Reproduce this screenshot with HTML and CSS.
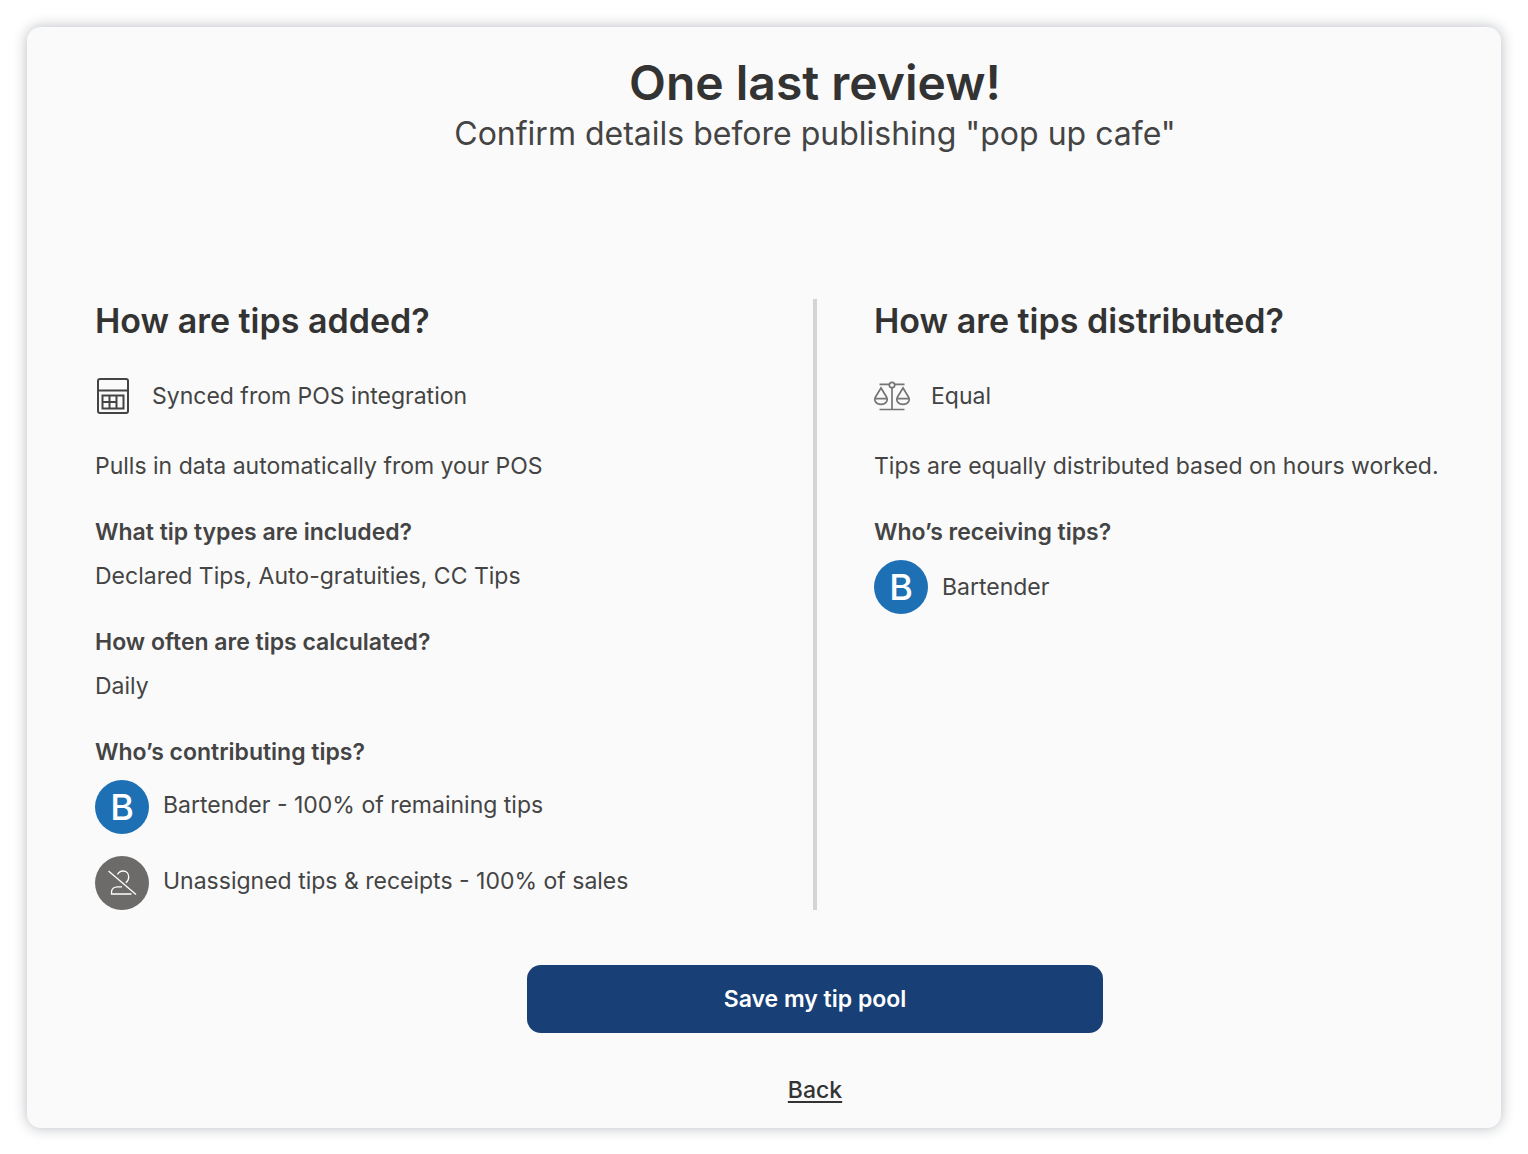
FILE: index.html
```html
<!DOCTYPE html>
<html lang="en">
<head>
<meta charset="utf-8">
<title>One last review!</title>
<meta name="viewport" content="width=device-width, initial-scale=1">
<link rel="stylesheet" href="styles.css">
</head>
<body>
<main class="card">
  <header class="intro">
    <h1 class="title">One last review!</h1>
    <p class="subtitle">Confirm details before publishing "pop up cafe"</p>
  </header>

  <div class="columns">
    <section class="column">
      <h2 class="heading">How are tips added?</h2>
      <div class="method">
        <svg class="method-icon" viewBox="0 0 36 36" fill="none" stroke="#444" stroke-width="2" aria-hidden="true">
          <rect x="3" y="1" width="30" height="34" rx="2"/>
          <path d="M3 12.500H33"/>
          <path d="M7.500 17.500H28.500V30.500H7.500ZM14.500 17.500V30.500M21.500 17.500V30.500M7.500 24H21.500"/>
        </svg>
        <span>Synced from POS integration</span>
      </div>
      <p class="description">Pulls in data automatically from your POS</p>
      <h3 class="question">What tip types are included?</h3>
      <p class="answer">Declared Tips, Auto-gratuities, CC Tips</p>
      <h3 class="question">How often are tips calculated?</h3>
      <p class="answer">Daily</p>
      <h3 class="question">Who’s contributing tips?</h3>
      <ul class="people">
        <li class="person">
          <span class="avatar">B</span>
          <span class="person-text">Bartender - 100% of remaining tips</span>
        </li>
        <li class="person">
          <span class="avatar avatar-none">
            <svg class="avatar-icon" viewBox="0 0 30 28" fill="none" stroke="#fff" stroke-width="1.300" aria-hidden="true">
              <path d="M1.500 2L29 25.500"/>
              <path d="M10.500 5.500C12 2.700 14.500 2 16 2C19.500 2 21.700 4.700 21.700 8C21.700 10.500 20.500 12.500 18.800 13.800"/>
              <path d="M15 17.800H10.500C7 17.800 4.500 20 4.500 23.500V25H24.500"/>
            </svg>
          </span>
          <span class="person-text">Unassigned tips &amp; receipts - 100% of sales</span>
        </li>
      </ul>
    </section>

    <section class="column column-divided">
      <h2 class="heading">How are tips distributed?</h2>
      <div class="method">
        <svg class="method-icon" viewBox="0 0 36 36" fill="none" stroke="#757575" stroke-width="1.700" aria-hidden="true">
          <circle cx="18" cy="7" r="2.700"/>
          <path d="M5.500 6.300H15.300M20.700 6.300H30.500M18 9.700V31.300M5.500 31.500H30.500"/>
          <path d="M7 10L1.500 19C.5 21 .7 22.500 1.500 23.700C3 26 5 26.300 7 26.300S11 26 12.500 23.700C13.300 22.500 13.500 21 12.500 19ZM1 20.700H13"/>
          <path d="M29 10L23.500 19C22.500 21 22.700 22.500 23.500 23.700C25 26 27 26.300 29 26.300S33 26 34.500 23.700C35.300 22.500 35.500 21 34.500 19ZM23 20.700H35"/>
        </svg>
        <span>Equal</span>
      </div>
      <p class="description">Tips are equally distributed based on hours worked.</p>
      <h3 class="question">Who’s receiving tips?</h3>
      <ul class="people">
        <li class="person">
          <span class="avatar">B</span>
          <span>Bartender</span>
        </li>
      </ul>
    </section>
  </div>

  <footer class="actions">
    <button class="save" type="button">Save my tip pool</button>
    <a class="back" href="#">Back</a>
  </footer>
</main>
</body>
</html>
```
FILE: styles.css
```css
* {
  box-sizing: border-box;
}

body {
  margin: 0;
  padding: 27px;
  background: #fff;
  color: #444;
  font-family: Inter, "Liberation Sans", sans-serif;
  font-size: 23px;
  line-height: 32px;
}

h1, h2, h3, p, ul {
  margin: 0;
  padding: 0;
}

.card {
  padding: 28px 0 22px;
  border-radius: 14px;
  background: #fafafa;
  box-shadow: 0 0 14px rgba(20, 30, 50, 0.3);
}

.intro {
  padding-left: 102px;
  text-align: center;
}

.title {
  color: #333;
  font-size: 48px;
  font-weight: 600;
  line-height: 56px;
}

.subtitle {
  font-size: 32px;
  line-height: 46px;
}

.columns {
  display: grid;
  grid-template-columns: 718fr 688fr;
  margin-top: 142px;
  padding-left: 68px;
}

.column-divided {
  padding-left: 57px;
  border-left: 4px solid #d4d4d4;
}

.heading {
  color: #333;
  font-size: 34px;
  font-weight: 600;
  line-height: 44px;
}

.method {
  display: flex;
  align-items: center;
  gap: 21px;
  margin-top: 35px;
  height: 36px;
}

.method-icon {
  width: 36px;
  height: 36px;
}

.description {
  margin-top: 36px;
}

.question {
  margin-top: 34px;
  font-size: 23px;
  font-weight: 600;
  line-height: 32px;
}

.answer {
  margin-top: 12px;
}

.people {
  display: flex;
  flex-direction: column;
  gap: 22px;
  margin-top: 12px;
  list-style: none;
}

.person {
  display: flex;
  align-items: center;
  gap: 14px;
}

.person-text {
  padding-bottom: 5px;
}

.avatar {
  display: flex;
  align-items: center;
  justify-content: center;
  width: 54px;
  height: 54px;
  border-radius: 50%;
  background: #1e70b5;
  color: #fff;
  font-size: 36px;
  font-weight: 500;
}

.avatar-none {
  background: #6c6b6a;
}

.avatar-icon {
  width: 30px;
  height: 28px;
}

.actions {
  display: flex;
  flex-direction: column;
  align-items: center;
  gap: 41px;
  margin-top: 55px;
  padding-left: 102px;
}

.save {
  width: 42%;
  height: 68px;
  border: 0;
  border-radius: 14px;
  background: #193f77;
  color: #fff;
  font: inherit;
  font-weight: 600;
}

.back {
  color: #333;
  font-weight: 500;
  text-decoration-thickness: 2px;
  text-underline-offset: 3px;
}
```
